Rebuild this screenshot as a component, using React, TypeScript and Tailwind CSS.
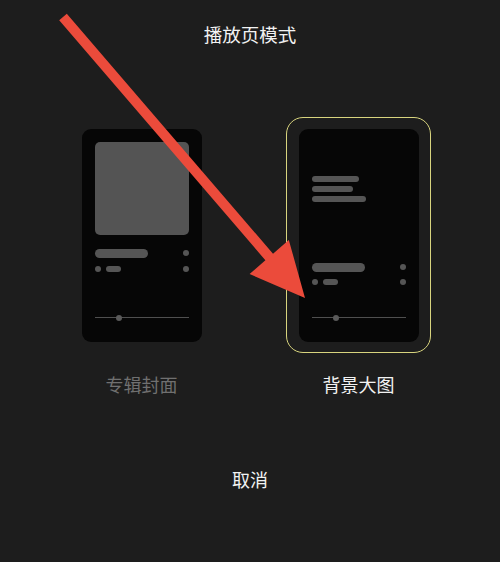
import React from 'react';

const font = { fontFamily: '"Noto Sans", "Noto Sans CJK SC", sans-serif' };

const Slider = () => (
  <div className="relative h-[6px] flex items-center">
    <div className="w-full h-[1.5px] bg-[#4f4f4f]" />
    <div className="absolute left-[21px] w-[6px] h-[6px] rounded-full bg-[#5a5a5a]" />
  </div>
);

const InfoRows = ({ first, second }: { first: string; second: string }) => (
  <>
    <div className={`flex justify-between items-center h-[9px] ${first}`}>
      <div className="w-[53px] h-[9px] rounded-full bg-[#555]" />
      <div className="w-[6px] h-[6px] rounded-full bg-[#555]" />
    </div>
    <div className={`flex justify-between items-center h-[6px] ${second}`}>
      <div className="flex items-center gap-[5px]">
        <div className="w-[6px] h-[6px] rounded-full bg-[#555]" />
        <div className="w-[15px] h-[6px] rounded-full bg-[#555]" />
      </div>
      <div className="w-[6px] h-[6px] rounded-full bg-[#555]" />
    </div>
  </>
);

const CoverPhone = () => (
  <div className="w-[120px] h-[213px] rounded-[9px] bg-[#060606] px-[13px] pt-[13px] flex flex-col">
    <div className="h-[93px] rounded-[5px] bg-[#545454]" />
    <InfoRows first="mt-[14px]" second="mt-[8px]" />
    <div className="mt-[43px]">
      <Slider />
    </div>
  </div>
);

const BackdropPhone = () => (
  <div className="w-[120px] h-[213px] rounded-[9px] bg-[#060606] px-[13px] pt-[47px] flex flex-col">
    <div className="flex flex-col gap-[4px]">
      <div className="w-[47px] h-[6px] rounded-full bg-[#555]" />
      <div className="w-[41px] h-[6px] rounded-full bg-[#555]" />
      <div className="w-[54px] h-[6px] rounded-full bg-[#555]" />
    </div>
    <InfoRows first="mt-[61px]" second="mt-[7px]" />
    <div className="mt-[30px]">
      <Slider />
    </div>
  </div>
);

const ModeOption = ({ label, active, children }: { label: string; active?: boolean; children: React.ReactNode }) => (
  <div className="w-[145px] flex flex-col items-center">
    <div
      className={`w-[145px] h-[236px] rounded-[17px] border-[1.5px] flex items-center justify-center ${
        active ? 'border-[#d8d47e]' : 'border-transparent'
      }`}
    >
      {children}
    </div>
    <div className={`mt-5 text-[18px] leading-6 ${active ? 'text-[#f2f2f2]' : 'text-[#707070]'}`}>{label}</div>
  </div>
);

export default function App() {
  return (
    <div className="relative w-[500px] h-[562px] bg-[#1d1d1d] overflow-hidden" style={font}>
      <div className="flex flex-col items-center pt-[23px]">
        <h1 className="text-[18.5px] leading-6 text-[#f2f2f2]">播放页模式</h1>
        <div className="flex gap-[72px] mt-[70px]">
          <ModeOption label="专辑封面">
            <CoverPhone />
          </ModeOption>
          <ModeOption label="背景大图" active>
            <BackdropPhone />
          </ModeOption>
        </div>
        <button className="mt-[71px] text-[18px] leading-6 text-[#f2f2f2]">取消</button>
      </div>

      {/* annotation arrow */}
      <svg className="absolute inset-0 pointer-events-none" width="500" height="562" viewBox="0 0 500 562">
        <polygon
          fill="#eb4b3b"
          points="66.8,13.7 273,253.7 288.8,239.9 305,298 249.6,274.1 265.4,260.3 59.2,20.3"
        />
      </svg>
    </div>
  );
}
